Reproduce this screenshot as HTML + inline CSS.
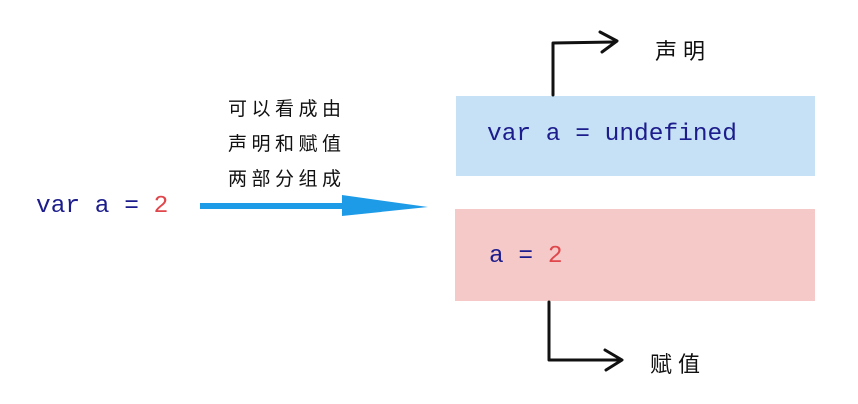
<!DOCTYPE html>
<html><head><meta charset="utf-8"><style>
body{margin:0;width:858px;height:404px;background:#fff;position:relative;overflow:hidden;font-family:"Liberation Sans","Noto Sans CJK SC",sans-serif}
.mono{font-family:"Liberation Mono",monospace;color:#1c1c8c;position:absolute;font-size:24.5px;line-height:30px;white-space:pre}
.r{color:#e0474c}
.cn{position:absolute;font-family:"Noto Sans CJK SC","WenQuanYi Zen Hei",sans-serif;color:#111}
.box{position:absolute}
</style></head><body>
<div class="box" style="left:456px;top:96px;width:359px;height:80px;background:#c6e1f6"></div>
<div class="box" style="left:455px;top:209px;width:360px;height:92px;background:#f4c9c8"></div>
<div class="mono" style="left:36px;top:192px">var a = <span class="r">2</span></div>
<div class="mono" style="left:487px;top:120px">var a = undefined</div>
<div class="mono" style="left:489px;top:242px">a = <span class="r">2</span></div>
<div class="cn" style="left:228px;top:90px;font-size:19px;line-height:35px;letter-spacing:4.5px">可以看成由<br>声明和赋值<br>两部分组成</div>
<div class="cn" style="left:655px;top:34px;font-size:22px;letter-spacing:6px">声明</div>
<div class="cn" style="left:650px;top:347px;font-size:22px;letter-spacing:6px">赋值</div>
<svg width="858" height="404" style="position:absolute;left:0;top:0">
<rect x="200" y="203" width="146" height="6" fill="#1e9be6"/>
<polygon points="342,195 428,207 342,216" fill="#1e9be6"/>
<g fill="none" stroke="#111" stroke-width="3" stroke-linecap="round" stroke-linejoin="round">
<path d="M553 95 L553 43 L614 42"/>
<path d="M600 32 L617 41 L602 52"/>
<path d="M549 302 L549 360 L620 360"/>
<path d="M605 350 L622 360 L606 370"/>
</g>
</svg>
</body></html>
